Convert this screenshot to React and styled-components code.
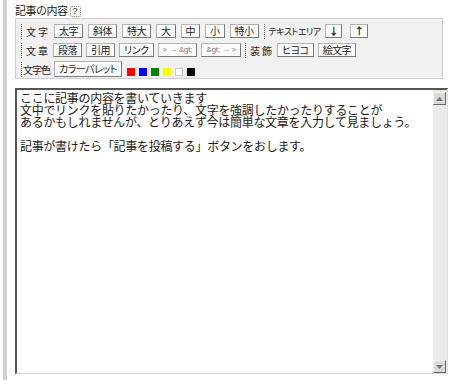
import React from "react";
import styled, { createGlobalStyle } from "styled-components";

const GlobalStyle = createGlobalStyle`
  html, body {
    margin: 0;
    padding: 0;
    background: #fff;
  }
  body {
    font-family: "Noto Sans CJK JP", "Noto Sans", sans-serif;
    color: #222;
  }
`;

const row1 = ["太字", "斜体", "特大", "大", "中", "小", "特小"];
const row2 = ["段落", "引用", "リンク"];
const palette = ["#ff0000", "#0000ff", "#008000", "#ffff00", "#ffffff", "#000000"];

const body = `ここに記事の内容を書いていきます
文中でリンクを貼りたかったり、文字を強調したかったりすることが
あるかもしれませんが、とりあえず今は簡単な文章を入力して見ましょう。

記事が書けたら「記事を投稿する」ボタンをおします。`;

function ArrowButton({ up }) {
  return (
    <ScrollButton>
      <svg width="7" height="4" viewBox="0 0 7 4">
        {up ? (
          <polygon points="0,4 7,4 3.5,0" fill="#777" />
        ) : (
          <polygon points="0,0 7,0 3.5,4" fill="#777" />
        )}
      </svg>
    </ScrollButton>
  );
}

export default function App() {
  return (
    <Page>
      <GlobalStyle />
      <SideBar />
      <Content>
        <Title>
          記事の内容
          <Help>?</Help>
        </Title>
        <Panel>
          <Row>
            <Label $spaced>文字</Label>
            {row1.map((t) => (
              <Button key={t}>{t}</Button>
            ))}
            <Label $narrow>テキストエリア</Label>
            <Button $arrow>↓</Button>
            <Button $arrow>↑</Button>
          </Row>
          <Row $gap={4}>
            <Label $spaced>文章</Label>
            {row2.map((t) => (
              <Button key={t}>{t}</Button>
            ))}
            <Button $small>&gt; → &amp;gt;</Button>
            <Button $small>&amp;gt; → &gt;</Button>
            <Label $spaced>装飾</Label>
            <Button>ヒヨコ</Button>
            <Button>絵文字</Button>
          </Row>
          <Row>
            <Label $tight>文字色</Label>
            <Button $tall>カラーパレット</Button>
            <Swatches>
              {palette.map((c) => (
                <Swatch key={c} $color={c} />
              ))}
            </Swatches>
          </Row>
        </Panel>
        <Editor>
          <TextArea defaultValue={body} spellCheck={false} />
          <ScrollBar>
            <ArrowButton up />
            <Track />
            <ArrowButton />
          </ScrollBar>
        </Editor>
      </Content>
    </Page>
  );
}

const Page = styled.div`
  display: flex;
  width: 450px;
  height: 385px;
  overflow: hidden;
`;

const SideBar = styled.div`
  width: 4px;
  height: 380px;
  margin-left: 3px;
  background: #d2d2d2;
`;

const Content = styled.div`
  display: flex;
  flex-direction: column;
  padding-left: 8px;
  width: 433px;
`;

const Title = styled.div`
  display: flex;
  align-items: center;
  height: 18px;
  font-size: 11px;
  letter-spacing: -0.5px;
  color: #222;
  padding-top: 1px;
  box-sizing: border-box;
`;

const Help = styled.span`
  display: inline-flex;
  align-items: center;
  justify-content: center;
  width: 9px;
  height: 9px;
  margin-left: 2px;
  margin-top: 4px;
  border: 1px dotted #777;
  border-radius: 2px;
  font-family: "Liberation Sans", sans-serif;
  font-size: 9px;
  letter-spacing: 0;
  line-height: 1;
  color: #222;
`;

const Panel = styled.div`
  display: flex;
  flex-direction: column;
  gap: 1px;
  width: 428px;
  box-sizing: border-box;
  padding: 3px 0 0 5px;
  height: 61px;
  background: #f1f1f1;
  border: 1px solid #cfcfcf;
`;

const Row = styled.div`
  display: flex;
  align-items: center;
  height: 18px;
  gap: ${(p) => p.$gap ?? 5}px;
`;

const Label = styled.span`
  display: flex;
  align-items: center;
  height: 15px;
  border-left: 1px dotted #666;
  padding-left: ${(p) => (p.$tight ? "1px" : "4px")};
  margin-right: -1px;
  font-size: ${(p) => (p.$narrow ? "9px" : "10px")};
  color: #222;
  letter-spacing: ${(p) =>
    p.$spaced ? "2px" : p.$narrow ? "-0.5px" : "-1px"};
  font-feature-settings: "palt";
  white-space: nowrap;
`;

const Button = styled.span`
  display: inline-flex;
  align-items: center;
  justify-content: center;
  height: ${(p) => (p.$tall ? "14px" : "12px")};
  padding: 0 ${(p) => (p.$arrow ? 3 : 4)}px;
  margin-right: ${(p) => (p.$arrow ? "3px" : "0")};
  background: #fdfdfd;
  border: 1px solid #b4b4b4;
  border-right-color: #7a7a7a;
  border-bottom-color: #7a7a7a;
  font-size: ${(p) => (p.$small ? "8px" : "10px")};
  color: ${(p) => (p.$small ? "#777" : "#222")};
  font-family: ${(p) =>
    p.$small ? '"Liberation Sans", sans-serif' : '"Noto Sans CJK JP", sans-serif'};
  font-weight: ${(p) => (p.$arrow ? "bold" : "normal")};
  letter-spacing: ${(p) => (p.$small ? "-0.2px" : "-0.5px")};
  font-feature-settings: "palt";
  white-space: nowrap;
  line-height: 1;
`;

const Swatches = styled.div`
  display: flex;
  gap: 4px;
  margin-top: 5px;
`;

const Swatch = styled.span`
  width: 6px;
  height: 6px;
  background: ${(p) => p.$color};
  border: 1px solid ${(p) => (p.$color === "#ffffff" ? "#ccc" : p.$color)};
`;

const Editor = styled.div`
  display: flex;
  margin-top: 9px;
  width: 433px;
  height: 286px;
  box-sizing: border-box;
  border-top: 2px solid #555;
  border-left: 2px solid #555;
  border-right: 1px solid #e2e2e2;
  border-bottom: 1px solid #d8d8d8;
`;

const TextArea = styled.textarea`
  flex: 1;
  border: none;
  outline: none;
  resize: none;
  overflow: hidden;
  margin: 0;
  padding: 2px 2px 2px 3px;
  font-family: "Noto Sans CJK JP", sans-serif;
  font-size: 12px;
  line-height: 12px;
  letter-spacing: -0.3px;
  color: #1a1a1a;
  background: #fff;
`;

const ScrollBar = styled.div`
  display: flex;
  flex-direction: column;
  width: 14px;
  padding-top: 2px;
  background: #eceae5;
`;

const ScrollButton = styled.div`
  display: flex;
  align-items: center;
  justify-content: center;
  width: 13px;
  height: 13px;
  box-sizing: border-box;
  background: #dcdad4;
  border: 1px solid #f4f4f4;
  border-right-color: #666;
  border-bottom-color: #666;
`;

const Track = styled.div`
  flex: 1;
`;
